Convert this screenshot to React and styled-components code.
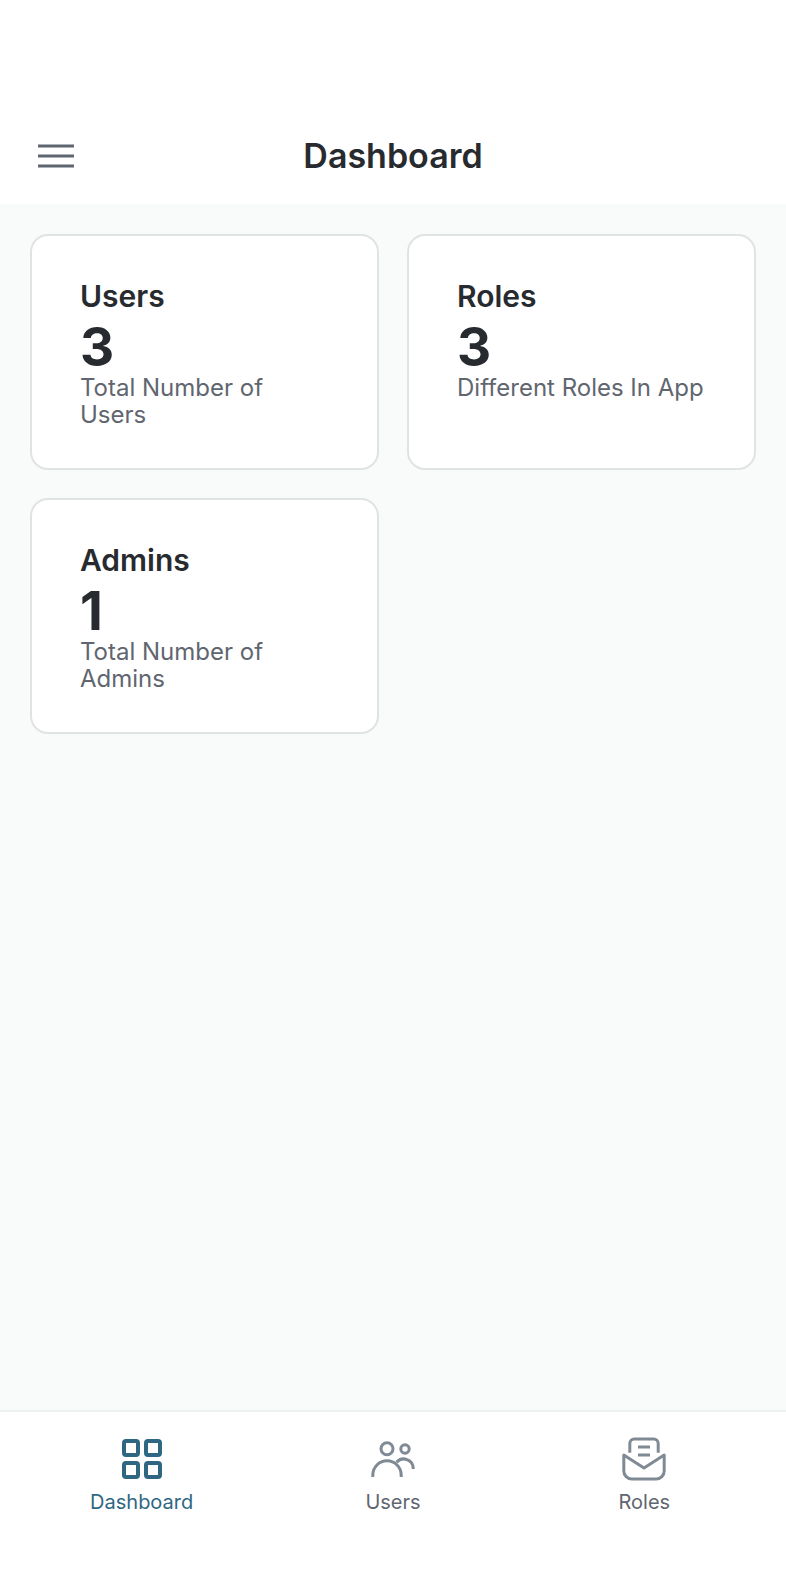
import React from "react";
import styled, { createGlobalStyle } from "styled-components";

const GlobalStyle = createGlobalStyle`
  *, *::before, *::after { box-sizing: border-box; }
  body {
    margin: 0;
    background: #ffffff;
    color: #272b30;
    font-family: Inter, "Liberation Sans", sans-serif;
  }
`;

const Screen = styled.div`
  display: flex;
  flex-direction: column;
  min-height: 100vh;
`;

const Header = styled.header`
  display: grid;
  grid-template-columns: 48px 1fr 48px;
  align-items: center;
  padding: 124px 32px 16px;
`;

const MenuButton = styled.button`
  display: flex;
  align-items: center;
  justify-content: center;
  width: 48px;
  height: 64px;
  padding: 0;
  border: 0;
  background: none;
  color: #5f6670;
  cursor: pointer;
`;

const Title = styled.h1`
  margin: 0;
  font-size: 34px;
  font-weight: 600;
  line-height: 40px;
  text-align: center;
`;

const Content = styled.main`
  flex: 1;
  padding: 30px;
  background: #f9fbfa;
`;

const CardGrid = styled.div`
  display: grid;
  grid-template-columns: repeat(2, minmax(0, 1fr));
  gap: 28px;
`;

const Card = styled.section`
  padding: 36px 48px 40px;
  border: 2px solid #e1e3e2;
  border-radius: 18px;
  background: #ffffff;
`;

const CardTitle = styled.h2`
  margin: 0;
  font-size: 30px;
  font-weight: 600;
  line-height: 48px;
`;

const CardValue = styled.p`
  margin: 0;
  font-size: 53px;
  font-weight: 700;
  line-height: 54px;
`;

const CardCaption = styled.p`
  margin: 0;
  color: #5f6670;
  font-size: 24px;
  line-height: 27px;
`;

const TabBar = styled.nav`
  display: grid;
  grid-template-columns: repeat(3, 1fr);
  padding: 23px 16px 78px;
  border-top: 2px solid #eff1f0;
  background: #ffffff;
`;

const Tab = styled.a`
  display: flex;
  flex-direction: column;
  align-items: center;
  gap: 7px;
  color: ${({ $active }) => ($active ? "#2f6783" : "#5f6670")};
  font-size: 20px;
  line-height: 24px;
  text-decoration: none;
`;

const TabIcon = styled.svg`
  width: 48px;
  height: 48px;
  fill: none;
  stroke: ${({ $active }) => ($active ? "#2f6783" : "#7f8a94")};
  stroke-width: ${({ $active }) => ($active ? 4 : 3)};
`;

const cards = [
  { title: "Users", value: 3, caption: "Total Number of Users" },
  { title: "Roles", value: 3, caption: "Different Roles In App" },
  { title: "Admins", value: 1, caption: "Total Number of Admins" },
];

const tabs = [
  {
    label: "Dashboard",
    active: true,
    icon: (
      <>
        <rect x="6" y="6" width="14" height="14" rx="2" />
        <rect x="28" y="6" width="14" height="14" rx="2" />
        <rect x="6" y="28" width="14" height="14" rx="2" />
        <rect x="28" y="28" width="14" height="14" rx="2" />
      </>
    ),
  },
  {
    label: "Users",
    icon: (
      <>
        <circle cx="18" cy="13.8" r="6" />
        <circle cx="36" cy="14" r="4.2" />
        <path d="M3.8 42v-2a14.2 14.2 0 0 1 28.4 0v2" />
        <path d="M27.6 27.2A9.5 9.5 0 0 1 44.2 33.3V34" />
      </>
    ),
  },
  {
    label: "Roles",
    icon: (
      <>
        <path d="M9.8 17.8V8.5a4.5 4.5 0 0 1 4.5-4.5h19.4A4.5 4.5 0 0 1 38.2 8.5v9.3" />
        <path d="M18 12h12M18 20h12" />
        <path
          strokeLinejoin="round"
          d="M3.8 20L24 33l20.2-13v16a8 8 0 0 1-8 8H11.8a8 8 0 0 1-8-8z"
        />
      </>
    ),
  },
];

export default function App() {
  return (
    <Screen>
      <GlobalStyle />
      <Header>
        <MenuButton type="button" aria-label="Open menu">
          <svg width="36" height="24" viewBox="0 0 36 24" stroke="currentColor" strokeWidth="3" aria-hidden="true">
            <path d="M0 2h36M0 12h36M0 22h36" />
          </svg>
        </MenuButton>
        <Title>Dashboard</Title>
      </Header>
      <Content>
        <CardGrid>
          {cards.map((card) => (
            <Card key={card.title}>
              <CardTitle>{card.title}</CardTitle>
              <CardValue>{card.value}</CardValue>
              <CardCaption>{card.caption}</CardCaption>
            </Card>
          ))}
        </CardGrid>
      </Content>
      <TabBar aria-label="Main">
        {tabs.map((tab) => (
          <Tab
            key={tab.label}
            href={`#${tab.label.toLowerCase()}`}
            $active={tab.active}
            aria-current={tab.active ? "page" : undefined}
          >
            <TabIcon viewBox="0 0 48 48" $active={tab.active} aria-hidden="true">
              {tab.icon}
            </TabIcon>
            {tab.label}
          </Tab>
        ))}
      </TabBar>
    </Screen>
  );
}
